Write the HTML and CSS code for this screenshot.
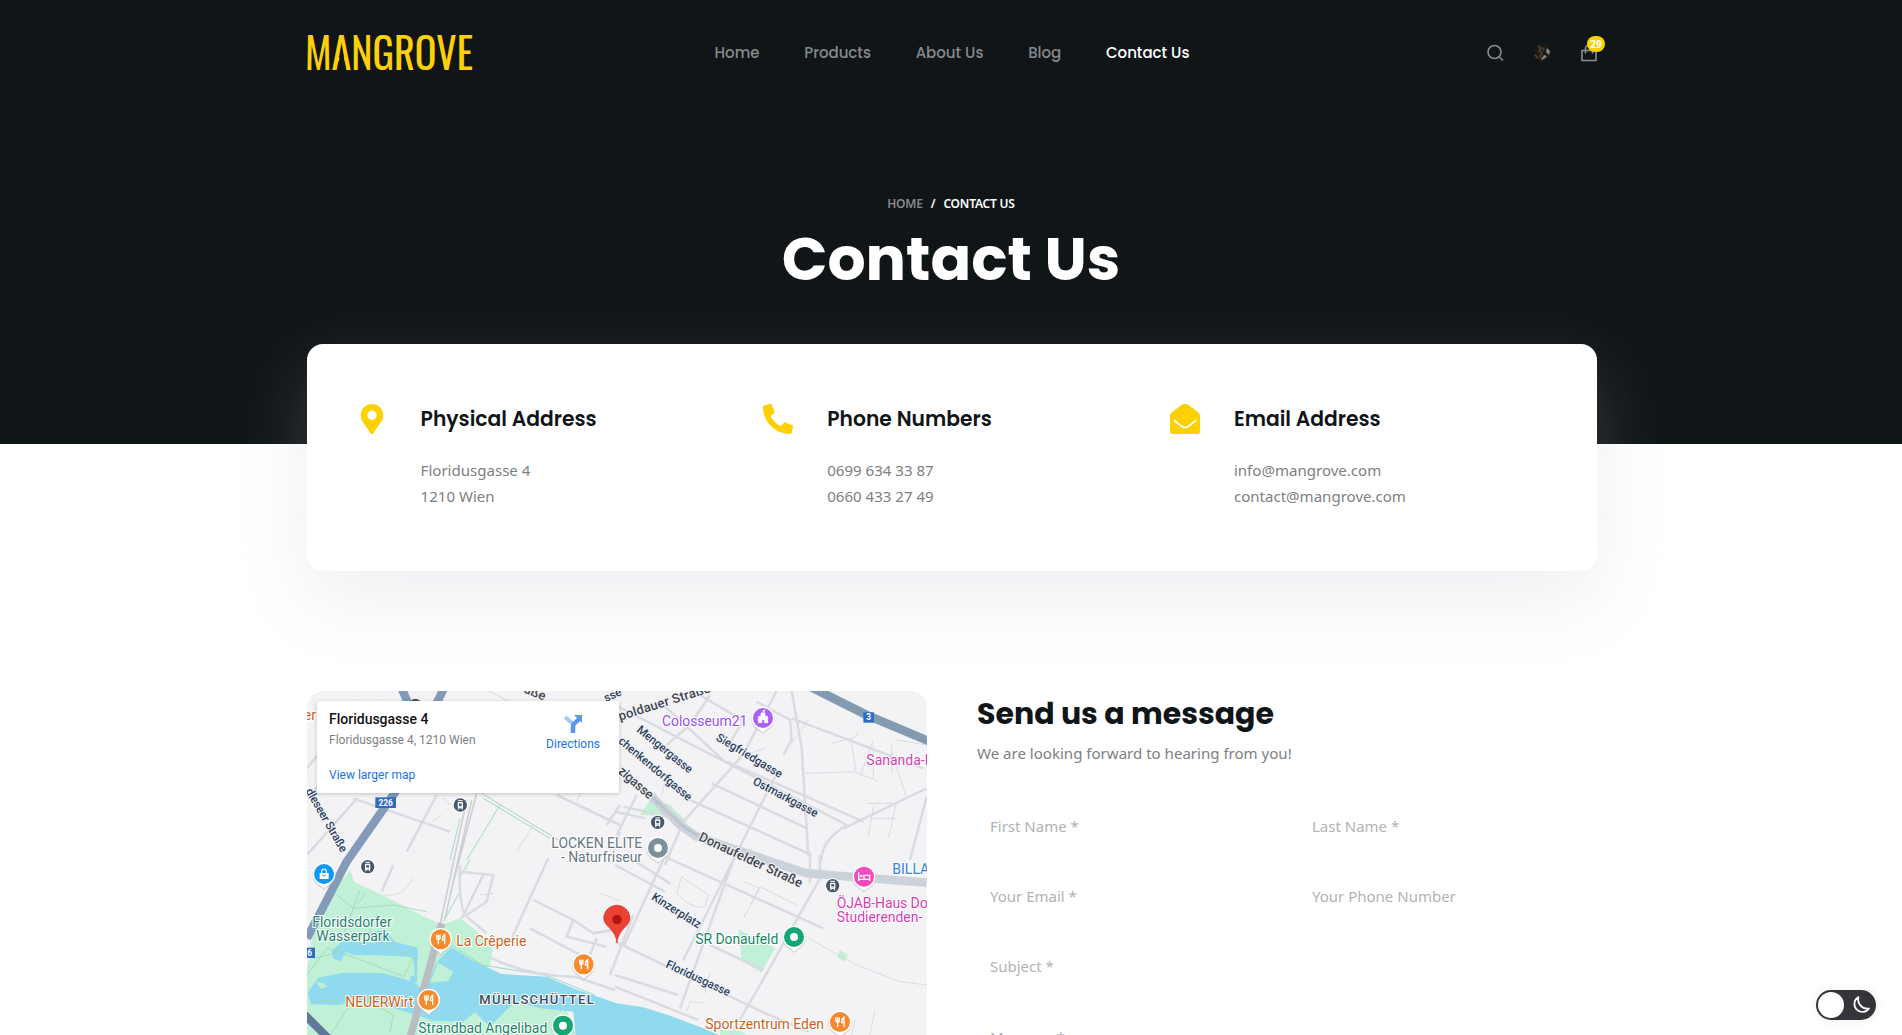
FILE: index.html
```html
<!DOCTYPE html>
<html lang="en">
<head>
<meta charset="utf-8">
<title>Contact Us – Mangrove</title>
<link rel="stylesheet" href="styles.css">
</head>
<body>
<div class="hero">
  <header class="header container">
    <a class="logo" aria-label="Mangrove">
      <svg width="167" height="40" viewBox="0 0 167 40">
        <text class="logo-text" x="-2" y="37" textLength="168" lengthAdjust="spacingAndGlyphs">MANGROVE</text>
        <path class="logo-cut" d="M30.200 37.500 34.700 13 39.200 37.500z"/>
      </svg>
    </a>
    <nav class="nav">
      <a>Home</a><a>Products</a><a>About Us</a><a>Blog</a><a class="active">Contact Us</a>
    </nav>
    <div class="tools">
      <svg class="tool" width="18" height="18" viewBox="0 0 18 18"><circle cx="8.500" cy="8" r="6.500"/><path d="m13.200 12.700 3.700 3.800"/></svg>
      <svg class="avatar" width="18" height="18" viewBox="0 0 18 18"><circle cx="9" cy="9" r="9" fill="#1b1917"/><path d="M5 2l3 2-2 3 3 2-2 4 3 2M2 11l3 3" stroke="#5b4636" stroke-width="1.500" fill="none"/><path d="M14 4l3 3-1 4-3-3zM11 11l3 1-3 3-3 1z" fill="#8b8781"/><path d="M10 3l2 1-1 3-2-1z" fill="#4a3c32"/></svg>
      <span class="cart">
        <svg class="tool" width="18" height="18" viewBox="0 0 18 18"><path d="M2 6.500h14V16.500H2zM5.500 9.500V4.500a3.500 3 0 0 1 7 0V9.500"/></svg>
        <b class="badge">29</b>
      </span>
    </div>
  </header>
  <div class="crumbs"><span class="muted">HOME</span><span>/</span><span>CONTACT US</span></div>
  <h1>Contact Us</h1>
</div>

<section class="info container">
  <div class="item">
    <svg class="icon" height="30" viewBox="0 0 384 512"><path d="M172.300 501.700C27 291 0 269.400 0 192 0 86 86 0 192 0s192 86 192 192c0 77.400-27 99-172.300 309.700a24 24 0 0 1-39.400 0zM192 272a80 80 0 1 0 0-160 80 80 0 0 0 0 160z"/></svg>
    <div><h3>Physical Address</h3><p>Floridusgasse 4<br>1210 Wien</p></div>
  </div>
  <div class="item">
    <svg class="icon phone" height="30" viewBox="0 0 512 512"><path transform="matrix(-1 0 0 1 512 0)" d="M493.400 24.600l-104-24c-11.300-2.600-22.900 3.300-27.500 13.900l-48 112c-4.200 9.800-1.400 21.300 6.900 28l60.600 49.600c-36 76.700-98.900 140.500-177.200 177.200l-49.600-60.600c-6.800-8.300-18.200-11.100-28-6.900l-112 48C3.900 366.500-2 378.100.6 389.400l24 104C27.100 504.200 36.700 512 48 512c256.100 0 464-207.500 464-464 0-11.200-7.700-20.900-18.600-23.400z"/></svg>
    <div><h3>Phone Numbers</h3><p>0699 634 33 87<br>0660 433 27 49</p></div>
  </div>
  <div class="item">
    <svg class="icon" height="30" viewBox="0 0 512 512"><path d="M48 512a48 48 0 0 1-48-48V196c0-16 7-30 18-40C60 120 150 50 190 20 210 5 235 0 256 0s46 5 66 20c40 30 130 100 172 136 11 10 18 24 18 40v268a48 48 0 0 1-48 48z"/><path class="flap" d="M66 276c40 36 90 72 118 94 22 18 46 34 72 34s50-16 72-34c28-22 78-58 118-94"/></svg>
    <div><h3>Email Address</h3><p>info@mangrove.com<br>contact@mangrove.com</p></div>
  </div>
</section>

<section class="contact container">
  <div class="map">
    <svg class="map-art" viewBox="21 18 1860 1032">
      <defs>
        <g id="pin"><path d="M0 47C-6 36-35 30-35 0a35 35 0 0 1 70 0C35 30 6 36 0 47z" fill="#b5babd" opacity=".5" transform="translate(0 2)"/><path d="M0 44C-5 34-34 28-34 0a34 34 0 0 1 68 0C34 28 5 34 0 44z" fill="#fff"/><circle r="30"/></g>
        <g id="food"><use href="#pin" fill="#f68a2c"/><path d="M-12-14v10q0 5 5 5t5-5v-10M-7-14v29M12 15V-14q-7 4-7 16h6" fill="none" stroke="#fff" stroke-width="4"/></g>
        <g id="tram"><circle r="23" fill="#fff"/><circle r="20" fill="#46586a"/><rect x="-8" y="-9" width="16" height="19" rx="3" fill="#fff"/><path d="M-7-13H7M-7 14l3-5M7 14 4 9" stroke="#fff" stroke-width="3"/><path d="M-4-4H4V2H-4zM-4 6h8" fill="#46586a" stroke="#46586a"/></g>
      </defs>
      <rect width="1900" height="1060" fill="#f3f3f5"/>

      <!-- parks -->
      <g class="park">
        <path d="M152 555l10 35 95 45 120 62 50 22 55-20 62 50 35 40-10 55-90 30 110 90 60-15 60 20 80 10 20 71H21V855l20-125 60-115z"/>
        <path d="M1050 344l60 15 55 55-80-20-65-4zM1315 733l110 55-40 75-60-35zM1620 795l25 15-12 20-22-15zM1260 1035l60 2 20 13h-80z"/>
        <path d="M580 1005l60-45 160 15 30 75H560z"/>
      </g>
      <!-- water -->
      <g class="water">
        <path d="M455 787l60 38 90 42 135 8 80 35 130 45 80 12 80 25 100 38 60 25H828l-8-75-100-10-75-20-75 75-45-43-35 28-90-3-60-20-90-27-72-12-60 12-85-2-10-35 32-45 75-15 120 2 90 25 35 30 35-90z"/>
        <path d="M95 795l38-28 95 8-30-32 60-8 25 35 70 18-2 105-22-2 8-75-100-5-105-1-8 20-25-10z"/>
      </g>
      <path class="park" d="M48 892l20 2 15 10-20 8zM425 805l-15 25 50 30-15 28-55 5zM135 800l110 45 95-25 5 50-15 5-80-28-110-5z"/>

      <!-- footpaths -->
      <g class="path">
        <path class="trail" d="M110 630l50 40 120-10 100 20M175 655l20-28M230 690l-20 45 60 50 80 40M21 870l60-80 90 30 140 55 30-60M40 820l70-15 70-190M40 950l150-10 90 50-10 50M90 1050l60-90"/>
        <path class="cycle" d="M545 325l230 140 M600 360L500 525M480 400l-30 125M480 620l-50 90M510 525l-30 50v50M455 780l90 60 190 30 150 60M550 340l200 120"/>
        <path d="M340 580q-30 60-90 50M540 630l40-5M560 15l80 40M430 340l20 20M425 390l-30 20M900 625l60 22M870 260l-40 90M1115 290h-20l-10 40M650 500l50-80 45 25M1595 175l70-18 10-18M1655 175l12 80M1515 265l150-5 70 30M1775 200l45 140M1720 180v100M1775 175v90M1720 165l-40 110M1700 355l90 0M1720 365l-15 90M1790 350l-25 110M1710 400h80M1330 590l50 20-50 90M1350 660l30-55 110 55M1145 575l80 55-10 35q-40 10-85-40z"/>
        <path d="M1525 760l145 80 130 50 80 10M1665 1005l-10 45M1725 975l-15 75M1160 980l10-30 45 5M1230 865l-15 60M1790 165l90 15M1475 175l50-70M1395 190l-60 20"/>
      </g>

      <!-- streets -->
      <g class="street">
        <path d="M21 340L160 190 250 48M21 250L180 48M21 510l150-170M160 340l290 100M410 330L320 500M280 540l-35 80M550 570l-65 130M480 560l100 10-20 80-60 40M480 540q-5 130 20 155l60 50M745 520l-110 240M700 645l120 60-20 50 120 30M820 705l60 40 60-10M690 730l170 90M890 760l-45 110M960 360L920 420M770 330l190 90M560 90l40 40"/>
        <path d="M945 60L1390 290 1640 420M1090 60l190 175M1180 18l150 90-50 80M1370 50l100 55 5 60-25 45M1430 18l-100 190L1150 410l-55 130M1100 180l70-60 60-90M1010 330l-60 120M945 380l90 20M960 440l-20 60M1150 405l-180-40M1280 230l410 180M1235 295l285 135M1170 345l365 165M1090 525l-120 260M1430 265l-130 260-150 300M1300 525L1140 970M945 540l150 80M1060 500l510 230M1475 18l30 170 20 325M1475 100L1870 250M1640 420q-80 50-75 110M1880 310L1630 430M1560 510v70l-160 285-130 225M1000 525l110 70M945 770l440 210 140 60M1230 780l160 75M945 870l190 60M1000 690l-70 180M945 905l150 60 100 40M1880 335l-50 190M1530 510v85"/>
        <path d="M565 815q120 60 260 60l120 40"/>
      </g>
      <path class="rail" d="M500 345L420 720 320 1060M515 345L435 700M530 325L455 610"/>
      <path d="M425 715L330 1060" stroke="#b9bdc2" stroke-width="22"/>
      <g fill="none" stroke="#cbd2da"><path d="M1050 330l90 90 50 35 330 110 360 28" stroke-width="26"/><path d="M1055 335l95 90 45 28" stroke="#b9c4cc" stroke-width="8"/></g>
      <g fill="none" stroke="#839bb9"><path d="M305 10l30 70M432 10l-35 70M290 315L140 530 21 760" stroke-width="25"/><path d="M1530 5L1700 90 1890 170" stroke="#839bb1" stroke-width="26"/><path d="M10 985l75 75" stroke="#5f7798" stroke-width="24"/></g>
      <circle cx="346" cy="60" r="19" fill="#46586a"/>

      <!-- road shields -->
      <g class="shield"><rect x="226" y="337" width="62" height="32"/><text x="257" y="362">226</text><rect x="1690" y="82" width="32" height="31"/><text x="1706" y="106">3</text><rect x="0" y="788" width="45" height="31"/><text x="29" y="812">6</text></g>

      <!-- street names -->
      <g class="name">
        <text transform="translate(16 318) rotate(60)" textLength="215">dleseer Straße</text>
        <text transform="translate(918 52) rotate(-25)">sse</text>
        <text class="major" transform="translate(670 22) rotate(22)">aße</text>
        <text class="major" transform="translate(960 107) rotate(-17.500)" textLength="287">poldauer Straße</text>
        <text transform="translate(1008 138) rotate(39)" textLength="204">Mengergasse</text>
        <text transform="translate(953 172) rotate(40)" textLength="276">chenkendorfgasse</text>
        <text class="major" transform="translate(952 262) rotate(41)" textLength="126">zigasse</text>
        <text transform="translate(1246 164) rotate(31)" textLength="225">Siegfriedgasse</text>
        <text transform="translate(1356 296) rotate(28)" textLength="216">Ostmarkgasse</text>
        <text class="major" transform="translate(1194 465) rotate(25)" textLength="338">Donaufelder Straße</text>
        <text transform="translate(1052 642) rotate(32)" textLength="168">Kinzerplatz</text>
        <text transform="translate(1095 846) rotate(25)" textLength="209">Floridusgasse</text>
      </g>

      <!-- places -->
      <g class="place">
        <text x="48" y="105" fill="#c8641e" text-anchor="end">er</text>
        <text x="1086" y="122" textLength="256" fill="#9a4fe8">Colosseum21</text>
        <text x="1699" y="240" fill="#d43fb4">Sananda-P</text>
        <text x="754" y="488" textLength="273" fill="#66777f">LOCKEN ELITE</text>
        <text x="783" y="530" textLength="243" fill="#66777f">- Naturfriseur</text>
        <text x="1777" y="566" fill="#2f7de0">BILLA</text>
        <text x="1610" y="669" fill="#d43fb4" textLength="273">ÖJAB-Haus Do</text>
        <text x="1610" y="711" fill="#d43fb4" textLength="257">Studierenden-</text>
        <text x="37" y="726" textLength="238" fill="#28806a">Floridsdorfer</text>
        <text x="49" y="768" textLength="220" fill="#28806a">Wasserpark</text>
        <text x="469" y="783" textLength="210" fill="#c8641e">La Crêperie</text>
        <text x="136" y="966" textLength="204" fill="#c8641e">NEUERWirt</text>
        <text x="355" y="1044" textLength="387" fill="#178565">Strandbad Angelibad</text>
        <text x="1186" y="778" textLength="249" fill="#178565">SR Donaufeld</text>
        <text x="1216" y="1032" textLength="356" fill="#c8641e">Sportzentrum Eden</text>
        <text class="district" x="538" y="957" textLength="343">MÜHLSCHÜTTEL</text>
      </g>

      <use href="#tram" x="481" y="360"/><use href="#tram" x="1073" y="412"/><use href="#tram" x="203" y="545"/><use href="#tram" x="1598" y="602"/>
      <use href="#food" x="422" y="763"/><use href="#food" x="851" y="838"/><use href="#food" x="386" y="945"/><use href="#food" x="1620" y="1011"/>
      <use href="#pin" x="1389" y="99" fill="#a862f5"/><path d="M1375 113V94h8V84h12v10h8v19h-10v-9h-8v9zM1389 84v-8h8" fill="#fff" stroke="#fff" stroke-width="2"/>
      <use href="#pin" x="1074" y="489" fill="#7c929b"/><circle cx="1074" cy="489" r="12" fill="#fff"/>
      <use href="#pin" x="1692" y="575" fill="#f04cc0"/><path d="M1676 562v26M1676 583h33v5M1709 583v-12h-17v10" fill="none" stroke="#fff" stroke-width="4"/><circle cx="1684" cy="573" r="4" fill="#fff"/>
      <use href="#pin" x="72" y="567" fill="#0f97f5"/><path d="M59 564h27v18H59z" fill="#fff"/><path d="M65 564v-5q0-7 7-7t7 7v5" fill="none" stroke="#fff" stroke-width="3.500"/><path d="M67 570q5 6 10 0" fill="none" stroke="#0f97f5" stroke-width="3"/>
      <use href="#pin" x="1482" y="756" fill="#16a673"/><circle cx="1482" cy="756" r="12" fill="#fff"/>
      <use href="#pin" x="789" y="1022" fill="#16a673"/><circle cx="789" cy="1022" r="12" fill="#fff"/>
      <path d="M951 774c-4-42-40-50-40-74a39.500 39.500 0 0 1 79 0c0 24-35 32-39 74z" fill="#ea4335" stroke="#c5221f" stroke-width="1.500"/><circle cx="951" cy="704" r="14" fill="#b31412"/>
    </svg>
    <div class="place-card">
      <div class="place-text">
        <strong>Floridusgasse 4</strong>
        <span>Floridusgasse 4, 1210 Wien</span>
        <a>View larger map</a>
      </div>
      <a class="directions">
        <svg width="18" height="19" viewBox="0 0 18 19"><path d="M1 3l8 7" stroke="#a9c9f7" stroke-width="4"/><path d="M9 19v-6q0-3 3-5l3-3" fill="none" stroke="#5c97e8" stroke-width="4.500"/><path d="M10 1h8v8z" fill="#5c97e8"/></svg>
        Directions
      </a>
    </div>
  </div>
  <form class="form">
    <h2>Send us a message</h2>
    <p>We are looking forward to hearing from you!</p>
    <div class="fields">
      <input placeholder="First Name *"><input placeholder="Last Name *">
      <input placeholder="Your Email *"><input placeholder="Your Phone Number">
      <input class="wide" placeholder="Subject *">
      <textarea class="wide" placeholder="Message *"></textarea>
    </div>
  </form>
</section>

<button class="theme" aria-label="Dark mode">
  <span class="knob"></span>
  <svg width="20" height="20" viewBox="0 0 20 20"><path d="M7.500 2A8 8 0 1 0 18 13.500 9.200 9.200 0 0 1 7.500 2z"/></svg>
</button>
</body>
</html>
```
FILE: styles.css
```css
* { box-sizing: border-box; margin: 0; }
body {
  height: 1035px;
  overflow: hidden;
  background: #fff;
  color: #7d8082;
  font: 15.05px/26px "Noto Sans", "Open Sans", sans-serif;
}
.container { width: 1290px; margin-inline: auto; position: relative; left: 1px; }
h1, h2, h3, .nav { font-family: "Poppins", "Inter", sans-serif; }
h2, h3 { color: #101518; }

.hero { height: 444px; background: #101518; color: #fff; text-align: center; }
.header { height: 106px; display: grid; grid-template-columns: 1fr auto 1fr; align-items: center; }
.logo { display: flex; }
.logo svg { overflow: visible; }
.logo-text { font: 400 42px "Oswald", "Roboto Condensed", "Liberation Sans Narrow", sans-serif; fill: #fdd007; }
.logo-cut { fill: #101518; }
.nav { display: flex; gap: 44.7px; font-size: 15px; font-weight: 500; color: #87898b; }
.nav .active { color: #fff; }
.tools { display: flex; justify-content: flex-end; align-items: center; gap: 29px; }
.tools svg { display: block; }
.tool { fill: none; stroke: #8b8e90; stroke-width: 1.6; }
.cart { position: relative; margin-right: -1px; }
.badge {
  position: absolute; left: 7px; top: -8px;
  width: 18px; height: 16px; border-radius: 8px;
  background: #fdd000; color: #fff; font-size: 10px; line-height: 16px; text-align: center;
}
.crumbs {
  display: flex; justify-content: center; gap: 8px;
  padding-top: 88px; font-size: 12px; font-weight: 600; line-height: 20px; letter-spacing: -.2px;
}
.muted { color: #87898b; }
h1 { margin-top: 9px; font-size: 60px; font-weight: 700; line-height: 72px; }

.info {
  display: grid; grid-template-columns: repeat(3, 1fr);
  min-height: 227px; margin-top: -100px; padding: 60px 35px;
  background: #fff; border-radius: 16px;
  box-shadow: 0 28px 74px rgba(180, 187, 200, .24);
}
.item { display: flex; gap: 18.6px; }
.icon { width: 60px; flex: none; fill: #fdd000; }
.phone { position: relative; left: -1px; }
.flap { fill: none; stroke: #fff; stroke-width: 30; }
h3 { font-size: 20.3px; font-weight: 600; line-height: 30px; margin-bottom: 23px; }

.contact { display: grid; grid-template-columns: 620px 620px; gap: 50px; margin-top: 120px; }
.map { position: relative; height: 344px; overflow: hidden; border-radius: 16px 16px 0 0; }
.map-art { display: block; width: 620px; height: 344px; font-family: Roboto, sans-serif; }
.park { fill: #c0f1d6; }
.water { fill: #8fdaee; }
.path { fill: none; stroke: #d3d7da; stroke-width: 2.5; }
.trail { stroke: #9fd6b8; }
.cycle { stroke: #8fd3bb; }
.street { fill: none; stroke: #d8dce0; stroke-width: 7.5; }
.rail { fill: none; stroke: #cdd0d3; stroke-width: 5; }
.shield rect { fill: #2f6cc0; }
.shield text { fill: #fff; font-size: 25px; font-weight: 700; text-anchor: middle; }
.name text { font-size: 35px; font-weight: 500; fill: #2b3f5f; paint-order: stroke; stroke: #f3f3f5; stroke-width: 6; }
.name .major { font-size: 39px; fill: #3f4650; }
.place text { font-size: 42px; paint-order: stroke; stroke: #fff; stroke-width: 6; }
.place .district { font-size: 39px; font-weight: 500; fill: #3d4a5c; }

.place-card {
  position: absolute; left: 10px; top: 10px; width: 302px; height: 92px;
  display: flex; justify-content: space-between; padding: 10px 19px 0 12px;
  background: #fff; border-radius: 2px; box-shadow: 0 1px 4px rgba(0, 0, 0, .2);
  font: 12px/15px Roboto, sans-serif;
}
.place-text { display: flex; flex-direction: column; }
.place-text strong { color: #111; font-size: 14px; font-weight: 500; line-height: 17px; margin-bottom: 5px; }
.place-text a, .directions { color: #1a73e8; }
.place-text a { margin-top: 20px; }
.directions { display: flex; flex-direction: column; align-items: center; gap: 4px; padding-top: 3px; }

h2 { font-size: 30px; font-weight: 700; line-height: 45px; margin-top: -.5px; }
.form p { margin-top: 4.500px; }
.fields { display: grid; grid-template-columns: 1fr 1fr; gap: 24px; margin-top: 37px; }
.wide { grid-column: 1 / -1; }
input, textarea {
  width: 100%; height: 46px; padding: 0 13px; border: 0; outline: 0; background: none; resize: none;
  font: inherit; font-size: 15px;
}
textarea { height: 150px; padding-top: 11px; overflow: hidden; }
::placeholder { color: #b1b3b5; opacity: 1; }

.theme {
  position: fixed; left: 1816px; top: 990px; width: 60px; height: 30px;
  display: flex; justify-content: space-between; align-items: center; padding: 0 5px 0 2px;
  border: 0; border-radius: 15px; background: #34343a; box-shadow: 0 0 12px rgba(0, 0, 0, .08);
}
.knob { width: 26px; height: 26px; border-radius: 50%; background: #fff; }
.theme svg { fill: none; stroke: #fff; stroke-width: 1.7; stroke-linejoin: round; }
```
